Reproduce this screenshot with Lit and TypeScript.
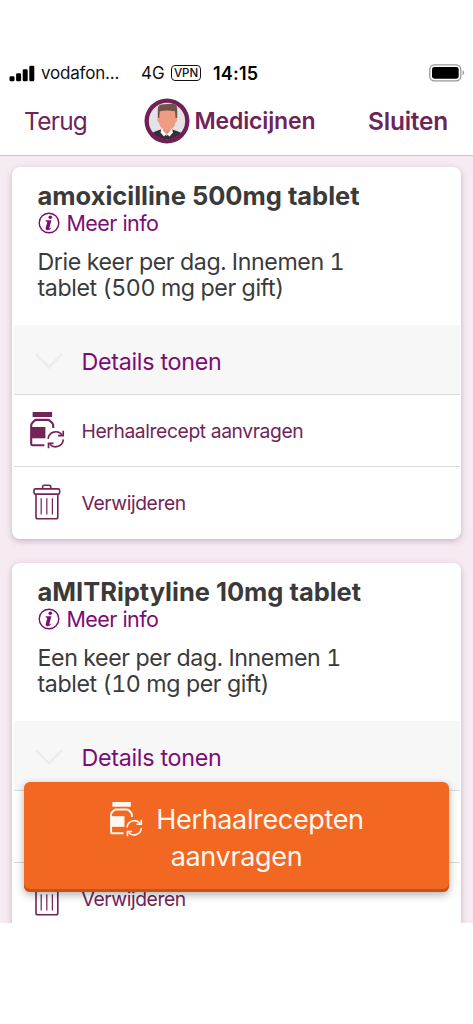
import { LitElement, html, css, svg } from "lit";
import { customElement, property } from "lit/decorators.js";

@customElement("med-jar-icon")
class JarIconElement extends LitElement {
  static styles = css`
    :host {
      display: block;
      flex: none;
      width: 36px;
      height: 38px;
    }

    svg {
      display: block;
      width: 100%;
      height: 100%;
    }
  `;

  render() {
    return html`
      <svg viewBox="0 0 36 38" fill="none" stroke="currentColor">
        <rect x="3.6" y="1" width="19.5" height="5" fill="currentColor" stroke="none" />
        <path
          d="M15.4 34.2H3.6Q2.2 34.2 2.2 32.8V14.5Q2.2 12.8 3.4 11.7L5.4 9.7Q6.2 8.9 7.4 8.9H18.9Q20.1 8.9 20.9 9.7L23 11.8Q24.2 13 24.2 14.6V17"
          stroke-width="2.1"
        />
        <rect x="1.9" y="16" width="14.5" height="11.3" fill="currentColor" stroke="none" />
        <path d="M19.1 27.8A7.8 7.8 0 0 1 33 23.8" stroke-width="1.6" />
        <path d="M34.3 28.4A7.8 7.8 0 0 1 20.7 33.2" stroke-width="1.6" />
        <path d="M34.2 19.8V24.6H29M19.5 37.2V32.3H24.5" stroke-width="1.7" />
      </svg>
    `;
  }
}

@customElement("med-card")
class MedCardElement extends LitElement {
  static styles = css`
    :host {
      display: block;
      flex: none;
      box-sizing: border-box;
      height: 372px;
      padding: 0 1.5px;
      border-radius: 8px;
      background: #fff;
      box-shadow: 0 2px 6px rgba(90, 50, 80, 0.3);
    }

    .summary {
      box-sizing: border-box;
      height: 158px;
      padding: 14px 24px 0;
      color: #3a3a3a;
    }

    .name {
      margin: 0;
      font-size: 25.5px;
      font-weight: 650;
      line-height: 30px;
      letter-spacing: -0.02px;
      white-space: nowrap;
    }

    .info {
      display: flex;
      align-items: center;
      gap: 7px;
      height: 24px;
      color: #7b0d75;
      font-size: 21.5px;
      letter-spacing: -0.55px;
    }

    .info svg {
      width: 22px;
      height: 22px;
    }

    .dose {
      margin: 14px 0 0;
      font-size: 23.2px;
      font-variant-numeric: tabular-nums;
      line-height: 26px;
      letter-spacing: -0.4px;
      white-space: pre-line;
    }

    .row {
      display: flex;
      align-items: center;
      box-sizing: border-box;
      height: 71.5px;
      padding: 2px 0 0 15px;
      border-top: 1.5px solid #d9d9d9;
      color: #722459;
      font-size: 19.3px;
      letter-spacing: -0.4px;
    }

    .details {
      height: 69px;
      padding-top: 4px;
      border-top: none;
      background: #f7f7f7;
      color: #7b0d75;
      font-size: 23.3px;
      letter-spacing: -0.3px;
    }

    .icon {
      display: flex;
      width: 53px;
      flex: none;
      margin-bottom: 2px;
    }

    .chevron {
      width: 30px;
      height: 18px;
      margin-left: 5px;
    }

    .trash {
      width: 28px;
      height: 36px;
      margin-left: 4.5px;
    }
  `;

  @property()
  name = "";

  @property()
  dose = "";

  render() {
    return html`
      <div class="summary">
        <h2 class="name">${this.name}</h2>
        <div class="info">
          <svg viewBox="0 0 22 22" fill="none" stroke="currentColor">
            <circle cx="11" cy="11" r="9.8" stroke-width="1.4" />
            <circle cx="12.3" cy="5.3" r="1.8" fill="currentColor" stroke="none" />
            <path
              d="M7.8 8.3H13.4L11.4 15.8Q11.2 16.7 11.8 16.5L13 15.4L13.5 15.8Q11.6 18.3 9.4 18.3Q7.2 18 7.8 15.8L9.2 10.3Q9.4 9.5 7.6 9.2Z"
              fill="currentColor"
              stroke="none"
            />
          </svg>
          <span>Meer info</span>
        </div>
        <p class="dose">${this.dose}</p>
      </div>
      <div class="row details">
        <span class="icon">
          <svg class="chevron" viewBox="0 0 30 18" fill="none">
            <path d="M2 2L15 15.5L28 2" stroke="#ececec" stroke-width="2.6" />
          </svg>
        </span>
        <span>Details tonen</span>
      </div>
      <div class="row">
        <span class="icon"><med-jar-icon></med-jar-icon></span>
        <span>Herhaalrecept aanvragen</span>
      </div>
      <div class="row">
        <span class="icon">
          <svg class="trash" viewBox="0 0 28 36" fill="none" stroke="currentColor">
            <path d="M9.6 4.8V3Q9.6 1.2 11.4 1.2H16Q17.8 1.2 17.8 3V4.8" stroke-width="1.6" />
            <rect x="1" y="4.9" width="25.6" height="5.2" rx="1.4" stroke-width="1.6" />
            <path d="M3 10.2V33Q3 34.8 4.8 34.8H23Q24.8 34.8 24.8 33V10.2" stroke-width="1.6" />
            <path d="M8.2 14.2V30.4M13.8 14.2V30.4M19.4 14.2V30.4" stroke-width="1.2" />
          </svg>
        </span>
        <span>Verwijderen</span>
      </div>
    `;
  }
}

@customElement("app-root")
class AppRootElement extends LitElement {
  static styles = css`
    :host {
      display: flex;
      flex-direction: column;
      position: relative;
      box-sizing: border-box;
      width: 473px;
      height: 1024px;
      padding-top: 56px;
      background: #fff;
      font-family: Inter, "Liberation Sans", sans-serif;
      overflow: hidden;
    }

    .status {
      display: flex;
      align-items: center;
      flex: none;
      height: 34px;
      padding: 0 8px 0 9px;
      color: #111;
      font-size: 17px;
      white-space: nowrap;
    }

    .signal {
      width: 26px;
      height: 17px;
    }

    .carrier {
      width: 100px;
      margin-left: 6px;
      letter-spacing: -0.2px;
    }

    .network {
      width: 24px;
    }

    .vpn {
      box-sizing: border-box;
      width: 30px;
      height: 16px;
      margin: 0 12px 0 6px;
      border: 1.4px solid #111;
      border-radius: 4px;
      font-size: 11.5px;
      font-weight: 500;
      line-height: 14px;
      text-align: center;
    }

    .time {
      flex: 1;
      color: #000;
      font-size: 18px;
      font-weight: 600;
      letter-spacing: 0.2px;
    }

    .battery {
      width: 36px;
      height: 18px;
    }

    .nav {
      display: flex;
      align-items: center;
      flex: none;
      box-sizing: border-box;
      height: 66px;
      padding: 0 25px 3px 24px;
      border-bottom: 1.5px solid #ccc3ca;
      color: #6f2459;
      font-size: 24.4px;
      white-space: nowrap;
    }

    .back {
      width: 119.5px;
      letter-spacing: -0.7px;
    }

    .avatar {
      width: 46px;
      height: 46px;
    }

    .title {
      flex: 1;
      margin-left: 5px;
      font-size: 23px;
      font-weight: 600;
      letter-spacing: -0.15px;
    }

    .close {
      font-weight: 600;
      letter-spacing: -0.2px;
    }

    .content {
      display: flex;
      flex-direction: column;
      gap: 24px;
      flex: none;
      box-sizing: border-box;
      height: 766.5px;
      padding: 11px 12px 0;
      background: #f6ebf3;
      overflow: hidden;
    }

    .order {
      position: absolute;
      left: 24px;
      top: 782px;
      display: flex;
      flex-direction: column;
      align-items: center;
      box-sizing: border-box;
      width: 425px;
      height: 110px;
      padding: 19px 0 0;
      border: none;
      border-radius: 6px;
      background: #f26722;
      box-shadow:
        inset 0 -3px 0 #c8511a,
        0 3px 9px rgba(0, 0, 0, 0.3);
      color: #fff8f0;
      font-family: inherit;
      font-size: 27px;
      line-height: 37px;
      letter-spacing: -0.35px;
    }

    .order-line {
      display: flex;
      gap: 13px;
      height: 37px;
    }

    .order-line med-jar-icon {
      width: 34px;
      height: 36px;
    }
  `;

  private _medicines = [
    {
      name: "amoxicilline 500mg tablet",
      dose: "Drie keer per dag. Innemen 1\ntablet (500 mg per gift)",
    },
    {
      name: "aMITRiptyline 10mg tablet",
      dose: "Een keer per dag. Innemen 1\ntablet (10 mg per gift)",
    },
  ];

  private _signal() {
    const bars = [5, 8, 12, 15.5];
    return bars.map(
      (h, i) =>
        svg`<rect x=${0.5 + i * 6.6} y=${16.3 - h} width="5" height=${h} rx="1.3" />`
    );
  }

  render() {
    return html`
      <div class="status">
        <svg class="signal" viewBox="0 0 26 17">${this._signal()}</svg>
        <span class="carrier">vodafon...</span>
        <span class="network">4G</span>
        <span class="vpn">VPN</span>
        <span class="time">14:15</span>
        <svg class="battery" viewBox="0 0 36 18">
          <rect x="0.8" y="0.8" width="31" height="16" rx="4.5" fill="none" stroke="#999" stroke-width="1.3" />
          <rect x="3" y="3" width="26.7" height="11.7" rx="2.4" fill="#000" />
          <path d="M33.6 6Q35.2 7 35.2 8.8Q35.2 10.6 33.6 11.6Z" fill="#999" />
        </svg>
      </div>
      <div class="nav">
        <span class="back">Terug</span>
        <svg class="avatar" viewBox="0 0 46 46">
          <defs>
            <clipPath id="face"><circle cx="23" cy="23" r="18.5" /></clipPath>
          </defs>
          <circle cx="23" cy="23" r="22.5" fill="#702057" />
          <circle cx="23" cy="23" r="18.2" fill="#e3e2e4" />
          <g clip-path="url(#face)">
            <path d="M5 43L7 36Q8 34 17 31.5L22.5 38L28 31.5Q37 34 39 36L41 43Z" fill="#3d2b3c" />
            <path d="M17.5 31L16.5 34.5L20 38.5L22.5 35.5L25.5 38.5L29 34.5L28 31Z" fill="#fff" />
            <path d="M19 28H26.5V32.5L22.8 36.5L19 32.5Z" fill="#e58f78" />
            <path d="M14 12H32.5V20Q33.8 20 33 22.5Q32.7 24.5 31.5 24.5Q30 32 23.2 32.5Q16.5 32 15 24.5Q13.8 24.5 13.5 22.5Q12.8 20 14 20Z" fill="#ef9c84" />
            <path d="M13.8 20V11Q13.8 7 17.5 6.5L30 5.5Q33.3 6.5 33.2 12V20H31.5L31 13.2Q23 12 15.8 13.2L15.2 20Z" fill="#725349" />
          </g>
        </svg>
        <span class="title">Medicijnen</span>
        <span class="close">Sluiten</span>
      </div>
      <div class="content">
        ${this._medicines.map(
          (m) => html`<med-card .name=${m.name} .dose=${m.dose}></med-card>`
        )}
      </div>
      <button class="order">
        <span class="order-line">
          <med-jar-icon></med-jar-icon>
          <span>Herhaalrecepten</span>
        </span>
        <span>aanvragen</span>
      </button>
    `;
  }
}
